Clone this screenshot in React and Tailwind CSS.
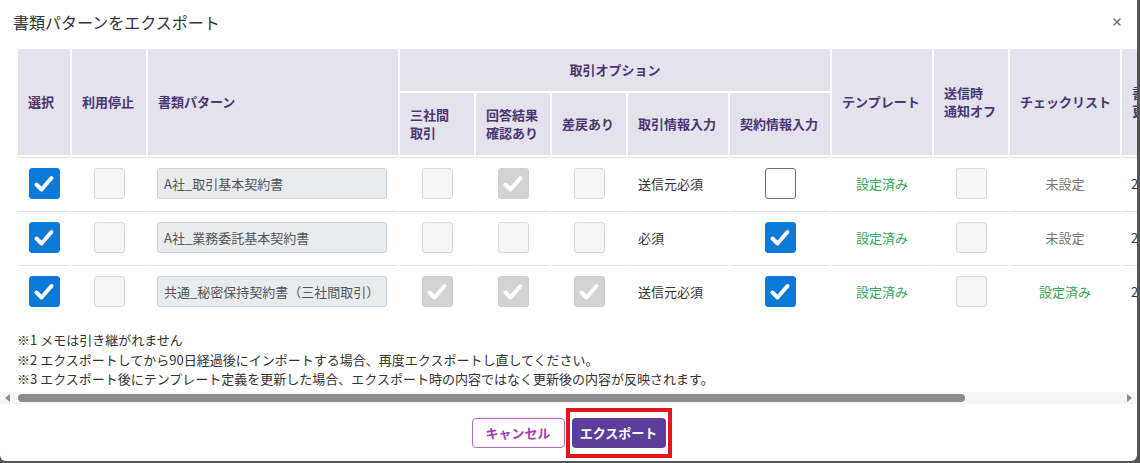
import { X } from "lucide-react";

const rows = [
  {
    name: "A社_取引基本契約書",
    opts: [false, true, false],
    trade: "送信元必須",
    contract: false,
    template: "設定済み",
    checklist: "未設定",
  },
  {
    name: "A社_業務委託基本契約書",
    opts: [false, false, false],
    trade: "必須",
    contract: true,
    template: "設定済み",
    checklist: "未設定",
  },
  {
    name: "共通_秘密保持契約書（三社間取引）",
    opts: [true, true, true],
    trade: "送信元必須",
    contract: true,
    template: "設定済み",
    checklist: "設定済み",
  },
];

const widths = [52, 74, 250, 74, 74, 74, 100, 100, 100, 74, 110, 110];

// checkbox look-alike
function Box({ on, disabled }) {
  let cls;
  if (disabled) {
    cls = on ? "bg-[#d3d3d3] border-[#d0d0d0]" : "bg-[#f6f6f6] border-[#d9d9d9]";
  } else {
    cls = on ? "bg-[#0a79d8] border-[#0a79d8]" : "bg-white border-[#6e6e6e]";
  }
  return (
    <span
      className={`mx-auto flex h-[31px] w-[31px] items-center justify-center rounded-[3px] border ${cls}`}
    >
      {on && (
        <svg viewBox="0 0 24 24" className="h-[24px] w-[24px]" fill="none">
          <path
            d="M4.5 12.5l5 5L19.5 6"
            stroke="white"
            strokeWidth="4"
            strokeLinecap="round"
            strokeLinejoin="round"
          />
        </svg>
      )}
    </span>
  );
}

const th = "bg-[#e4e2ec] pl-[10px] text-left align-middle font-bold text-[#4b3573]";
const td = "h-[52px] border-t border-[#dddde4] align-middle";

export default function App() {
  return (
    <div className="h-[463px] w-[1140px] bg-[#555] font-['Noto_Sans_CJK_JP',sans-serif]">
      <div className="flex h-[461px] w-[1137px] flex-col overflow-hidden rounded-b-[6px] bg-white">
        {/* Title */}
        <div className="flex h-[44px] items-center justify-between pl-[13px] pr-[14px]">
          <h2 className="text-[16px] text-[#333]">書類パターンをエクスポート</h2>
          <X className="h-[12px] w-[12px] text-[#777]" strokeWidth={3.2} />
        </div>

        {/* Table */}
        <div className="overflow-hidden pl-[16px] pt-[3px]">
          <table className="w-[1218px] table-fixed border-separate border-spacing-[2px] text-[13px] leading-[18px] text-[#333]">
            <colgroup>
              {widths.map((w, i) => (
                <col key={i} style={{ width: w }} />
              ))}
            </colgroup>
            <thead>
              <tr className="h-[42px]">
                <th rowSpan={2} className={th}>選択</th>
                <th rowSpan={2} className={th}>利用停止</th>
                <th rowSpan={2} className={th}>書類パターン</th>
                <th colSpan={5} className="bg-[#e4e2ec] text-center align-middle font-bold text-[#4b3573]">
                  取引オプション
                </th>
                <th rowSpan={2} className={th}>テンプレート</th>
                <th rowSpan={2} className={th}>送信時<br />通知オフ</th>
                <th rowSpan={2} className={th}>チェックリスト</th>
                <th rowSpan={2} className={th}>書類<br />更新日時</th>
              </tr>
              <tr className="h-[62px]">
                <th className={th}>三社間<br />取引</th>
                <th className={th}>回答結果<br />確認あり</th>
                <th className={th}>差戻あり</th>
                <th className={th}>取引情報入力</th>
                <th className={th}>契約情報入力</th>
              </tr>
            </thead>
            <tbody>
              {rows.map((r) => (
                <tr key={r.name}>
                  <td className={td}><Box on /></td>
                  <td className={td}><Box disabled /></td>
                  <td className={`${td} pl-[9px]`}>
                    <div className="flex h-[31px] w-[230px] items-center rounded-[3px] border border-[#cfd4da] bg-[#e9ecef] px-[6px] text-[#555]">
                      {r.name}
                    </div>
                  </td>
                  {r.opts.map((o, i) => (
                    <td key={i} className={td}><Box on={o} disabled /></td>
                  ))}
                  <td className={`${td} pl-[10px]`}>{r.trade}</td>
                  <td className={td}><Box on={r.contract} /></td>
                  <td className={`${td} text-center text-[#34a853]`}>{r.template}</td>
                  <td className={td}><Box disabled /></td>
                  <td
                    className={`${td} text-center ${
                      r.checklist === "設定済み" ? "text-[#34a853]" : "text-[#777]"
                    }`}
                  >
                    {r.checklist}
                  </td>
                  <td className={`${td} pl-[9px] whitespace-nowrap`}>2024/04/01</td>
                </tr>
              ))}
            </tbody>
          </table>
        </div>

        {/* Notes */}
        <div className="mt-[11px] pl-[17px] text-[13px] leading-[19.5px] text-[#333]">
          <p>※1 メモは引き継がれません</p>
          <p>※2 エクスポートしてから90日経過後にインポートする場合、再度エクスポートし直してください。</p>
          <p>※3 エクスポート後にテンプレート定義を更新した場合、エクスポート時の内容ではなく更新後の内容が反映されます。</p>
        </div>

        {/* Scrollbar */}
        <div className="mt-[3px] flex h-[12px] w-[1136px] items-center bg-[#f6f6f6]">
          <span className="ml-[5px] h-0 w-0 border-y-[4px] border-r-[5px] border-y-transparent border-r-[#8c8c8c]" />
          <span className="ml-[8px] h-[8px] w-[947px] rounded-full bg-[#8c8c8c]" />
          <span className="ml-auto mr-[4px] h-0 w-0 border-y-[4px] border-l-[5px] border-y-transparent border-l-[#8c8c8c]" />
        </div>

        {/* Footer */}
        <div className="mt-[14px] flex justify-center gap-[7px]">
          <button className="h-[30px] w-[93px] rounded-[4px] border border-[#b965c6] bg-white text-[13px] font-bold text-[#a23cb4]">
            キャンセル
          </button>
          <div className="relative">
            <button className="h-[30px] w-[94px] rounded-[4px] bg-[#5d3d9a] text-[13px] font-bold text-white">
              エクスポート
            </button>
            <span className="pointer-events-none absolute -bottom-[10px] -left-[6px] -right-[6px] -top-[10px] border-[4px] border-[#e3151d]" />
          </div>
        </div>
      </div>
    </div>
  );
}
